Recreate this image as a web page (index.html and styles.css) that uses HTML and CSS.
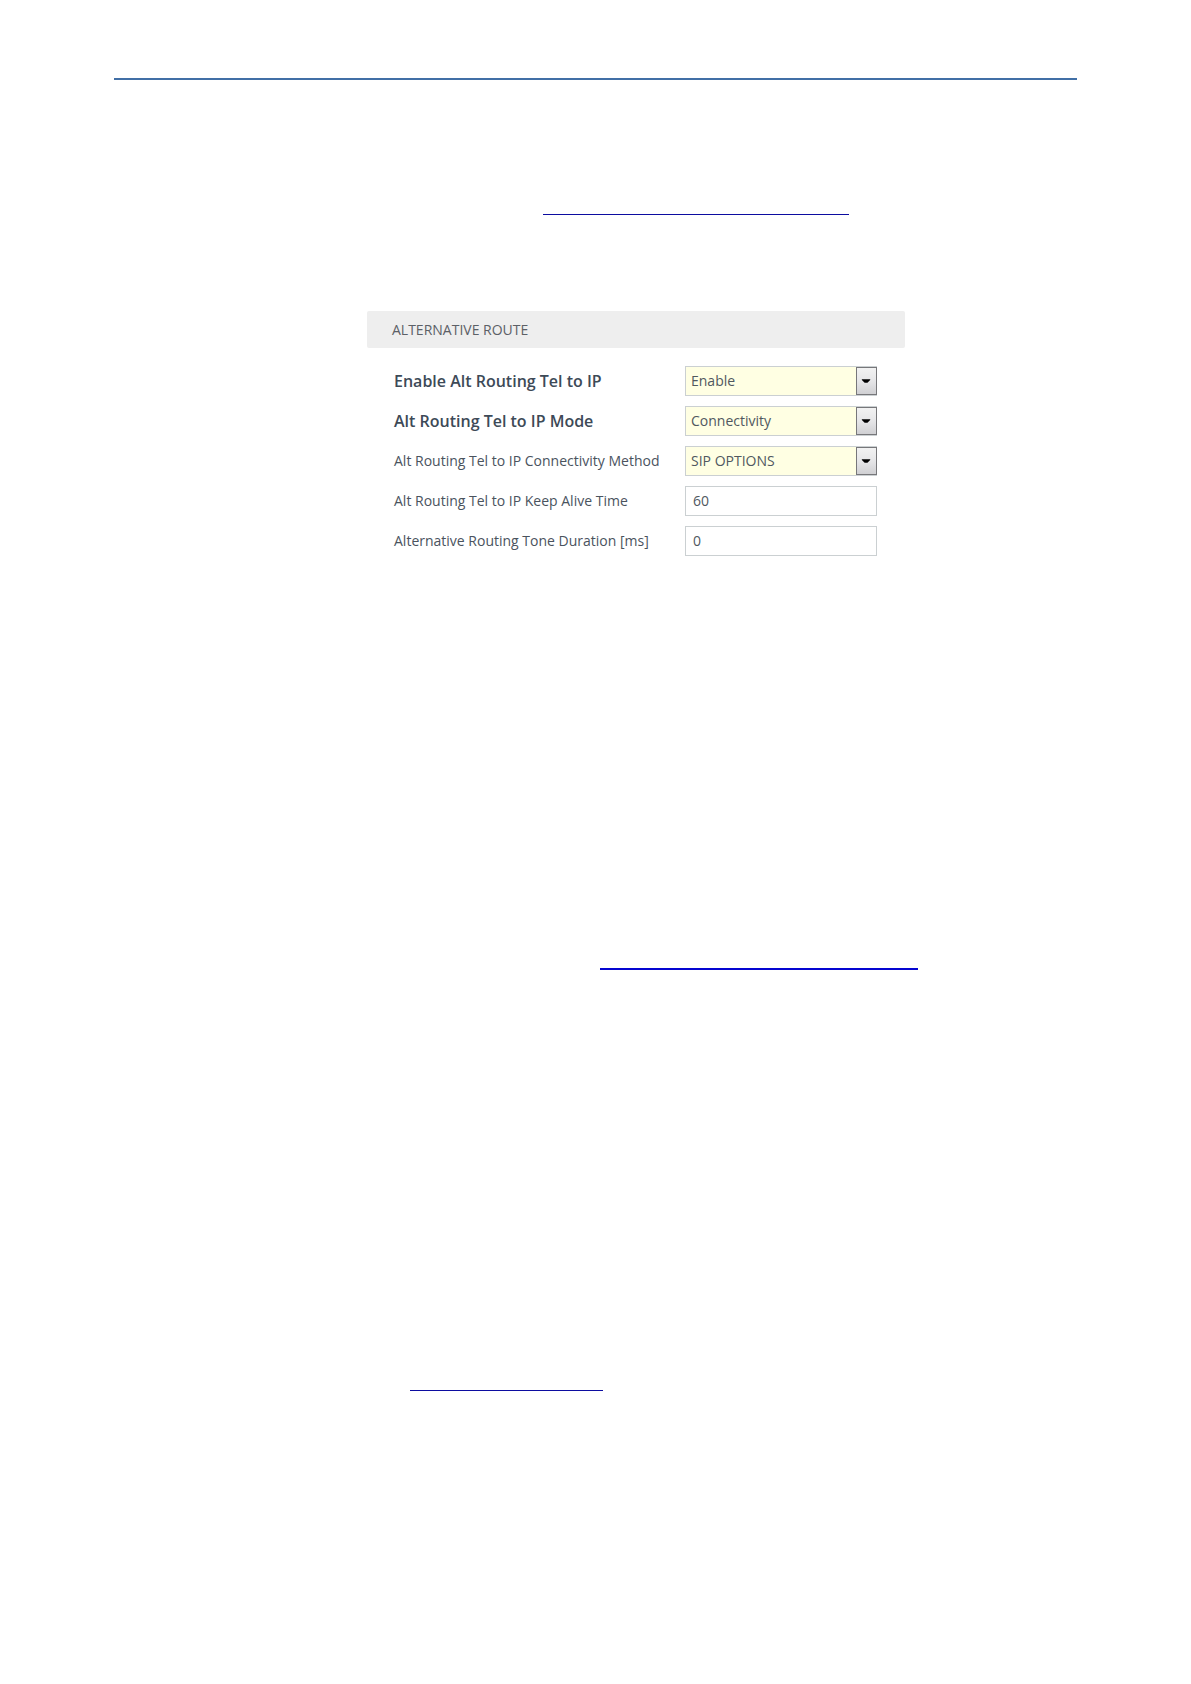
FILE: index.html
```html
<!doctype html>
<html lang="en">
<head>
<meta charset="utf-8">
<title>Alternative Route</title>
<meta name="viewport" content="width=device-width, initial-scale=1">
<link rel="stylesheet" href="styles.css">
</head>
<body>
    <main class="page">
        <hr class="page-rule">
        <hr class="rule rule-first">
        <form class="panel">
            <h1>ALTERNATIVE ROUTE</h1>
            <div class="fields">
                <label class="changed" for="altEnable">Enable Alt Routing Tel to IP</label>
                <div class="select">
                    <select id="altEnable"><option>Enable</option></select>
                    <svg viewBox="0 0 20 28"><path d="M5 12h9v1l-3 3h-3l-3-3z"/></svg>
                </div>
                <label class="changed" for="altMode">Alt Routing Tel to IP Mode</label>
                <div class="select">
                    <select id="altMode"><option>Connectivity</option></select>
                    <svg viewBox="0 0 20 28"><path d="M5 12h9v1l-3 3h-3l-3-3z"/></svg>
                </div>
                <label for="altMethod">Alt Routing Tel to IP Connectivity Method</label>
                <div class="select">
                    <select id="altMethod"><option>SIP OPTIONS</option></select>
                    <svg viewBox="0 0 20 28"><path d="M5 12h9v1l-3 3h-3l-3-3z"/></svg>
                </div>
                <label for="altKeepAlive">Alt Routing Tel to IP Keep Alive Time</label>
                <input id="altKeepAlive" type="text" value="60">
                <label for="altTone">Alternative Routing Tone Duration [ms]</label>
                <input id="altTone" type="text" value="0">
            </div>
        </form>
        <hr class="rule rule-second">
        <hr class="rule rule-third">
    </main>
</body>
</html>
```
FILE: styles.css
```css
*{
    box-sizing: border-box;
    margin: 0;
    padding: 0;
}
body{
    background: #ffffff;
    color: #4a535e;
    font: 14px/20px "Open Sans", "Noto Sans", sans-serif;
}
.page{
    margin: 0 114px;
    padding: 78px 0 240px;
}
hr{
    border: 0;
}
.page-rule{
    height: 2px;
    background: #416fa6;
}
.rule{
    height: 1px;
    background: #0c0ca0;
}
.rule-first{
    width: 306px;
    margin: 134px 0 96px 429px;
}
.rule-second{
    width: 318px;
    height: 2px;
    margin: 412px 0 420px 486px;
    background: #0505d0;
}
.rule-third{
    width: 193px;
    margin-left: 296px;
}
.panel{
    margin: 0 172px 0 253px;
}
.panel h1{
    padding: 0 25px;
    background: #eeeeee;
    border-radius: 2px;
    font-size: 14px;
    font-weight: normal;
    line-height: 37px;
    color: #5c6066;
}
.fields{
    display: grid;
    grid-template-columns: 1fr 192px;
    gap: 10px 0;
    align-items: center;
    padding: 18px 28px 0 27px;
}
.fields label{
    white-space: nowrap;
}
.fields .changed{
    font-size: 16px;
    font-weight: 600;
    color: #3d4a57;
}
.select{
    position: relative;
}
.fields select,
.fields input{
    display: block;
    width: 100%;
    height: 30px;
    padding: 0 7px 1px;
    border: 1px solid #cbd0d2;
    border-radius: 0;
    background: #ffffff;
    color: #50585f;
    font: inherit;
}
.fields select{
    appearance: none;
    padding: 0 24px 0 5px;
    background: #ffffe3;
}
/* drop-down button over the right end of the select */
.select svg{
    position: absolute;
    top: 1px;
    right: 0;
    width: 21px;
    height: 28px;
    border: 1px solid #77777a;
    background: linear-gradient(#f2f2f2, #e6e6e8 50%, #d0d0d3);
    pointer-events: none;
}
```
